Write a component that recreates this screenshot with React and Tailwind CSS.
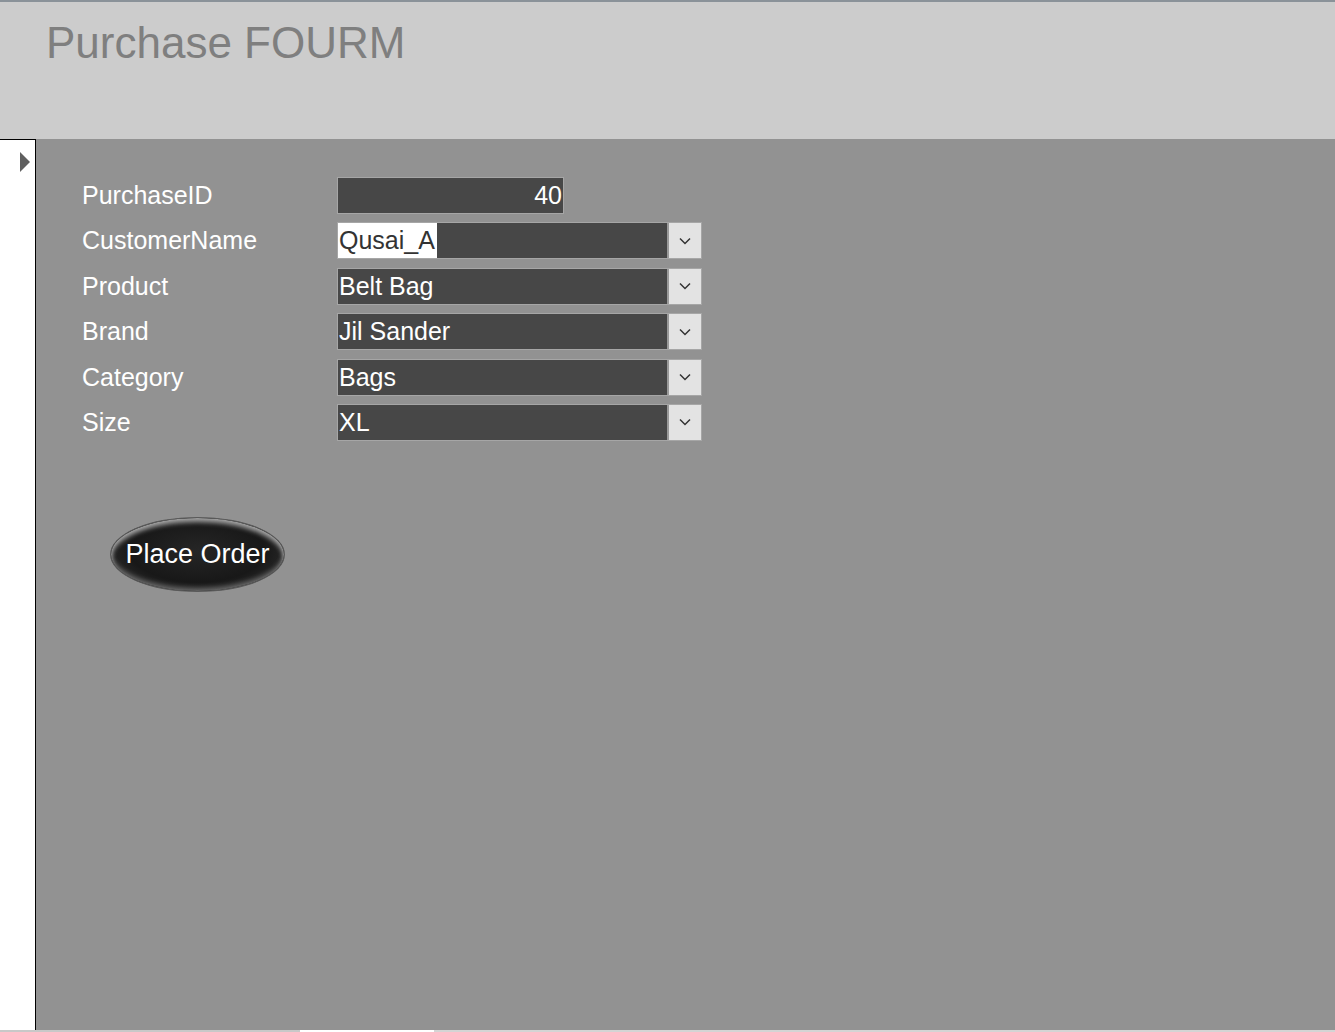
const font = { fontFamily: '"Liberation Sans", Arial, sans-serif' }

const rows = [
  { label: 'PurchaseID', value: '40', kind: 'text' },
  { label: 'CustomerName', value: 'Qusai_A', kind: 'combo', selected: true },
  { label: 'Product', value: 'Belt Bag', kind: 'combo' },
  { label: 'Brand', value: 'Jil Sander', kind: 'combo' },
  { label: 'Category', value: 'Bags', kind: 'combo' },
  { label: 'Size', value: 'XL', kind: 'combo' },
]

function Chevron() {
  return (
    <svg width="12" height="8" viewBox="0 0 12 8" fill="none">
      <path d="M1 1.5l5 5 5-5" stroke="#333" strokeWidth="1.5" />
    </svg>
  )
}

function Field({ row }) {
  if (row.kind === 'text') {
    return (
      <div className="h-[37px] w-[227px] border border-[#a6a6a6] bg-[#474747] flex items-center justify-end pr-[1px] text-[25px] leading-none text-white">
        {row.value}
      </div>
    )
  }
  return (
    <div className="h-[37px] w-[365px] border border-[#a6a6a6] bg-[#474747] flex">
      <div className="flex-1 flex items-center text-[25px] leading-none">
        {row.selected ? (
          <span className="h-full flex items-center bg-white text-[#333] pl-[1px] pr-[2px]">{row.value}</span>
        ) : (
          <span className="pl-[1px] text-white">{row.value}</span>
        )}
      </div>
      <div className="w-[34px] bg-[#e3e3e3] border-l-2 border-[#9a9a9a] flex items-center justify-center">
        <Chevron />
      </div>
    </div>
  )
}

export default function App() {
  return (
    <div className="w-[1335px] h-[1032px] flex flex-col bg-white overflow-hidden" style={font}>
      <div className="h-[139px] shrink-0 border-t-2 border-[#8a9299] bg-[#cccccc] pl-[46px] pt-[19px]">
        <h1 className="text-[44px] leading-none text-[#7f7f7f]">Purchase FOURM</h1>
      </div>
      <div className="flex-1 flex min-h-0">
        <div className="w-[36px] shrink-0 bg-white border-t border-r border-black pt-[12px] pl-[20px]">
          <svg width="10" height="20" viewBox="0 0 10 20">
            <path d="M0 0l10 10L0 20z" fill="#5f5f5f" />
          </svg>
        </div>
        <div className="flex-1 bg-[#929292] pl-[46px] pt-[38px] flex flex-col">
          <div className="flex flex-col gap-[8.4px]">
            {rows.map((r) => (
              <div key={r.label} className="flex items-center h-[37px]">
                <div className="w-[255px] text-[25px] leading-none text-white">{r.label}</div>
                <Field row={r} />
              </div>
            ))}
          </div>
          <button
            className="mt-[76px] ml-[28px] w-[175px] h-[75px] rounded-[50%] border border-[#5a5a5a] text-white text-[27px] leading-none flex items-center justify-center shadow-[inset_0_4px_5px_rgba(255,255,255,0.6),inset_0_-3px_5px_rgba(255,255,255,0.3)] bg-[radial-gradient(ellipse_at_50%_45%,#262626_0%,#181818_55%,#3c3c3c_100%)]"
            style={font}
          >
            Place Order
          </button>
        </div>
      </div>
      <div className="h-[2px] shrink-0 flex">
        <div className="w-[300px] bg-[#c8c8c8]" />
        <div className="w-[134px] bg-white" />
        <div className="flex-1 bg-[#d4d4d4]" />
      </div>
    </div>
  )
}
